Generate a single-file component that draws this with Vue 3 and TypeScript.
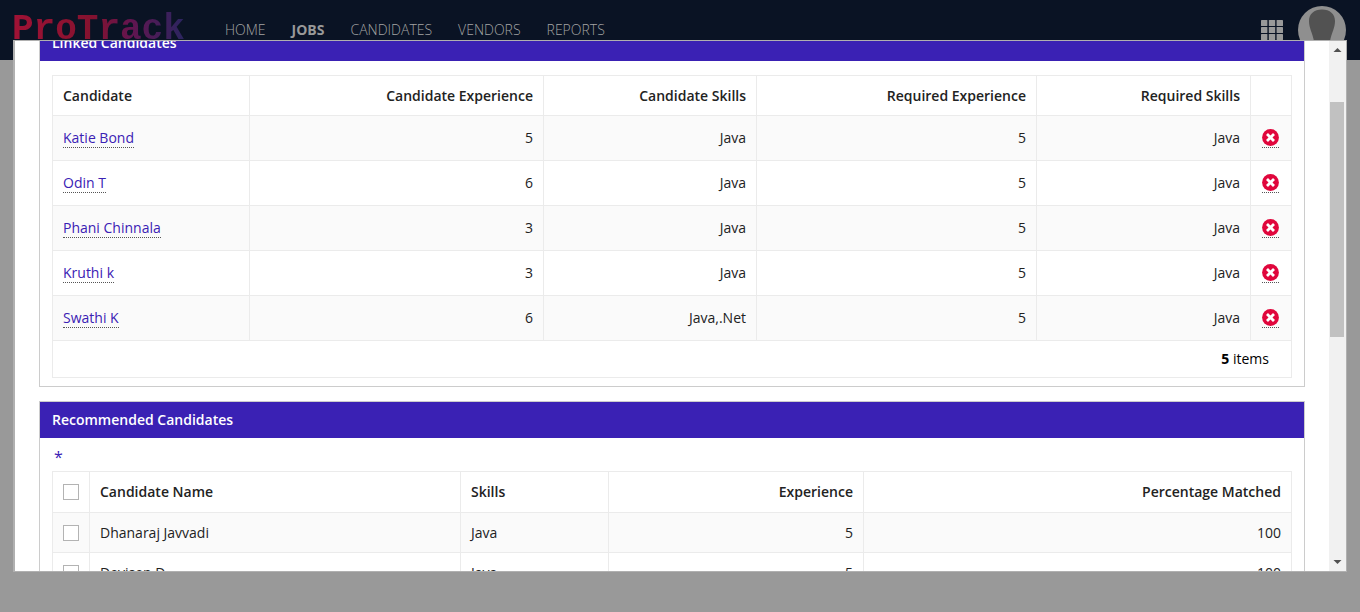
<script setup lang="ts">
import { ref } from 'vue'

interface Candidate {
  name: string
  experience: number
  skills: string
  requiredExperience: number
  requiredSkills: string
}

interface Recommendation {
  name: string
  skills: string
  experience: number
  matched: number
}

const navItems = ['HOME', 'JOBS', 'CANDIDATES', 'VENDORS', 'REPORTS']
const activeItem = 'JOBS'

const linked = ref<Candidate[]>([
  { name: 'Katie Bond', experience: 5, skills: 'Java', requiredExperience: 5, requiredSkills: 'Java' },
  { name: 'Odin T', experience: 6, skills: 'Java', requiredExperience: 5, requiredSkills: 'Java' },
  { name: 'Phani Chinnala', experience: 3, skills: 'Java', requiredExperience: 5, requiredSkills: 'Java' },
  { name: 'Kruthi k', experience: 3, skills: 'Java', requiredExperience: 5, requiredSkills: 'Java' },
  { name: 'Swathi K', experience: 6, skills: 'Java,.Net', requiredExperience: 5, requiredSkills: 'Java' },
])

const recommended: Recommendation[] = [
  { name: 'Dhanaraj Javvadi', skills: 'Java', experience: 5, matched: 100 },
  { name: 'Devisen D', skills: 'Java', experience: 5, matched: 100 },
]

const selected = ref<string[]>([])

function toggleAll(event: Event) {
  const checked = (event.target as HTMLInputElement).checked
  selected.value = checked ? recommended.map((r) => r.name) : []
}

function unlink(name: string) {
  linked.value = linked.value.filter((c) => c.name !== name)
}
</script>

<template>
  <div class="page">
    <header class="topbar">
      <a class="logo" href="#">ProTrack</a>
      <nav class="nav" aria-label="Main">
        <a v-for="item in navItems" :key="item" href="#" :class="{ active: item === activeItem }">{{ item }}</a>
      </nav>
      <button class="apps" type="button" aria-label="Applications">
        <svg width="22" height="20" viewBox="0 0 22 20" aria-hidden="true">
          <g fill="#999">
            <template v-for="row in 3" :key="row">
              <rect v-for="col in 3" :key="col" :x="(col - 1) * 7.8" :y="(row - 1) * 7" width="6.4" height="6" rx="0.6" />
            </template>
          </g>
        </svg>
      </button>
      <button class="avatar" type="button" aria-label="Account">
        <svg width="48" height="48" viewBox="0 0 48 48" aria-hidden="true">
          <circle cx="24" cy="24" r="24" fill="#8f8f8f" />
          <path d="M24 3.500C16 3.500 11 8 11 15C11 22 14.500 27 16 35H32C33.500 27 37 22 37 15C37 8 32 3.500 24 3.500Z" fill="#525252" />
        </svg>
      </button>
    </header>

    <div class="dialog" role="dialog" aria-label="Job candidates">
      <div class="viewport">
        <div class="content">
          <section class="panel">
            <h2>Linked Candidates</h2>
            <div class="panel-body linked-body">
              <table class="grid linked">
                <colgroup>
                  <col class="c197" /><col class="c294" /><col class="c213" /><col class="c280" /><col class="c214" /><col class="c41" />
                </colgroup>
                <thead>
                  <tr>
                    <th scope="col">Candidate</th>
                    <th scope="col" class="num">Candidate Experience</th>
                    <th scope="col" class="num">Candidate Skills</th>
                    <th scope="col" class="num">Required Experience</th>
                    <th scope="col" class="num">Required Skills</th>
                    <td></td>
                  </tr>
                </thead>
                <tbody>
                  <tr v-for="c in linked" :key="c.name">
                    <td><a class="link" href="#">{{ c.name }}</a></td>
                    <td class="num">{{ c.experience }}</td>
                    <td class="num">{{ c.skills }}</td>
                    <td class="num">{{ c.requiredExperience }}</td>
                    <td class="num">{{ c.requiredSkills }}</td>
                    <td>
                      <button class="remove" type="button" :aria-label="`Unlink ${c.name}`" @click="unlink(c.name)">
                        <svg width="17" height="17" viewBox="0 0 17 17" aria-hidden="true">
                          <circle cx="8.500" cy="8.500" r="8.400" fill="#e0063c" />
                          <path d="M5 5L12 12M12 5L5 12" stroke="#fff" stroke-width="2.800" />
                        </svg>
                      </button>
                    </td>
                  </tr>
                </tbody>
                <tfoot>
                  <tr>
                    <td colspan="6" class="num total"><strong>{{ linked.length }}</strong> items</td>
                  </tr>
                </tfoot>
              </table>
            </div>
          </section>

          <section class="panel">
            <h2>Recommended Candidates</h2>
            <div class="panel-body">
              <div class="required">*</div>
              <table class="grid recommended">
                <colgroup>
                  <col class="c37" /><col class="c371" /><col class="c148" /><col class="c255" /><col class="c428" />
                </colgroup>
                <thead>
                  <tr>
                    <td>
                      <input type="checkbox" aria-label="Select all" :checked="selected.length === recommended.length" @change="toggleAll" />
                    </td>
                    <th scope="col">Candidate Name</th>
                    <th scope="col">Skills</th>
                    <th scope="col" class="num">Experience</th>
                    <th scope="col" class="num">Percentage Matched</th>
                  </tr>
                </thead>
                <tbody>
                  <tr v-for="r in recommended" :key="r.name">
                    <td><input v-model="selected" type="checkbox" :value="r.name" :aria-label="`Select ${r.name}`" /></td>
                    <td>{{ r.name }}</td>
                    <td>{{ r.skills }}</td>
                    <td class="num">{{ r.experience }}</td>
                    <td class="num">{{ r.matched }}</td>
                  </tr>
                </tbody>
              </table>
            </div>
          </section>
        </div>
      </div>
      <div class="scrollbar" aria-hidden="true">
        <svg width="17" height="17" viewBox="0 0 17 17"><path d="M4.500 11L8.500 7L12.500 11Z" fill="#505050" /></svg>
        <div class="track"><div class="thumb"></div></div>
        <svg width="17" height="17" viewBox="0 0 17 17"><path d="M4.500 6L8.500 10L12.500 6Z" fill="#505050" /></svg>
      </div>
    </div>
  </div>
</template>

<style>
body {
  margin: 0;
  background: #999;
}
</style>

<style scoped>
.page {
  position: relative;
  height: 100vh;
  overflow: hidden;
  background: #999;
  font: 14px/20px "Open Sans", "Noto Sans", sans-serif;
  color: #222;
}

.page * {
  box-sizing: border-box;
}

button {
  padding: 0;
  border: 0;
  background: none;
  cursor: pointer;
}

svg {
  display: block;
}

.topbar {
  display: flex;
  align-items: center;
  height: 60px;
  padding: 0 14px 0 12px;
  background: #0a1324;
}

.logo {
  width: 213px;
  font: bold 36px/48px "Liberation Mono", monospace;
  text-decoration: none;
  color: transparent;
  background: linear-gradient(90deg, #a01235 0, #84122f 80px, #611550 120px, #2b2560 172px);
  background-clip: text;
}

.nav {
  display: flex;
  gap: 26px;
  flex: 1;
}

.nav a {
  color: #a3a3a3;
  font-weight: 300;
  text-decoration: none;
}

.nav a.active {
  color: #999;
  font-weight: 700;
}

.apps {
  margin-right: 15px;
}

.dialog {
  position: absolute;
  inset: 40px 13px;
  display: flex;
  border: 1px solid #b0b0b0;
  border-left-width: 2px;
  background: #fff;
}

.viewport {
  flex: 1;
  min-width: 0;
  overflow: hidden;
}

.content {
  display: flex;
  flex-direction: column;
  gap: 14px;
  margin-top: -17px;
  padding: 0 24px;
}

.panel {
  border: 1px solid #ccc;
}

.panel h2 {
  margin: 0;
  padding: 8px 12px;
  background: #3a21b4;
  color: #fff;
  font-size: 14px;
  font-weight: 600;
  line-height: 20px;
}

.panel-body {
  padding: 0 12px 8px;
}

.linked-body {
  padding-top: 14px;
}

.required {
  height: 33px;
  padding: 9px 2px 0;
  color: #3a21b4;
  font-size: 16px;
}

.grid {
  width: 100%;
  table-layout: fixed;
  border-collapse: separate;
  border-spacing: 0;
  border: solid #ebebeb;
  border-width: 1px 0 0 1px;
}

.grid th,
.grid td {
  padding: 0 10px;
  border: solid #ebebeb;
  border-width: 0 1px 1px 0;
  text-align: left;
  vertical-align: middle;
}

.grid th {
  font-weight: 600;
}

.grid .num {
  text-align: right;
}

.grid tbody tr:nth-child(odd) {
  background: #fafafa;
}

.linked thead tr {
  height: 40px;
}

.linked tbody tr {
  height: 45px;
}

.linked tfoot tr {
  height: 37px;
}

.grid .total {
  padding-right: 22px;
  color: #000;
}

.recommended thead tr {
  height: 41px;
}

.recommended tbody tr {
  height: 40px;
}

.c197 { width: 197px; }
.c294 { width: 294px; }
.c213 { width: 213px; }
.c280 { width: 280px; }
.c214 { width: 214px; }
.c41 { width: 41px; }
.c37 { width: 37px; }
.c371 { width: 371px; }
.c148 { width: 148px; }
.c255 { width: 255px; }
.c428 { width: 428px; }

.link {
  display: inline-block;
  border-bottom: 1px dotted #555;
  color: #3a21b4;
  line-height: 19px;
  text-decoration: none;
}

.remove {
  display: block;
  margin: 1px 0 0 1px;
  padding-bottom: 1px;
  border-bottom: 1px dotted #555;
}

input[type="checkbox"] {
  display: block;
  width: 16px;
  height: 16px;
  margin: 0;
  border: 1px solid #b3b3b3;
  background: #fff;
  appearance: none;
}

input[type="checkbox"]:checked {
  background: #3a21b4;
}

.scrollbar {
  display: flex;
  flex-direction: column;
  width: 17px;
  background: #f1f1f1;
}

.track {
  flex: 1;
  padding-top: 44px;
}

.thumb {
  height: 235px;
  margin: 0 2px 0 1px;
  background: #c1c1c1;
}
</style>
